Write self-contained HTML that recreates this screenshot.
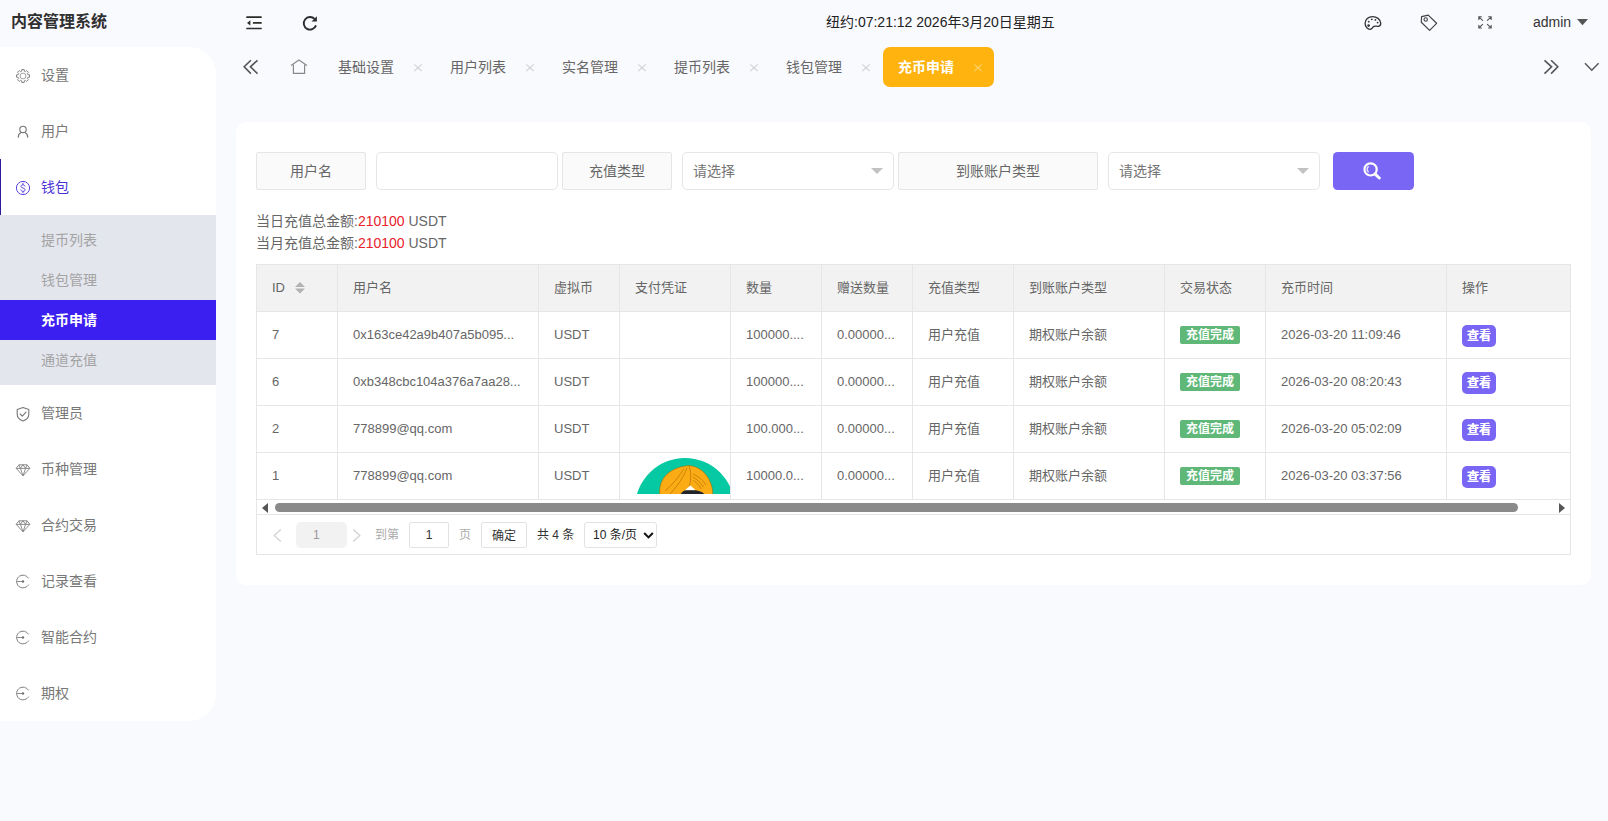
<!DOCTYPE html>
<html lang="zh-CN">
<head>
<meta charset="utf-8">
<title>内容管理系统</title>
<style>
*{box-sizing:border-box;margin:0;padding:0}
html,body{width:1608px;height:821px;overflow:hidden}
body{background:#f9fafe;font-family:"Liberation Sans","Noto Sans CJK SC",sans-serif;font-size:14px;color:#666;position:relative}
.abs{position:absolute}
svg{display:block;overflow:visible}

/* ---------- sidebar ---------- */
#logo{left:11px;top:9px;height:26px;line-height:26px;font-size:16px;font-weight:bold;color:#303030}
#side{left:0;top:47px;width:216px;height:674px;background:#fff;border-radius:0 27px 27px 0;overflow:hidden}
.mi{position:absolute;left:0;width:216px;height:56px;line-height:56px;padding-left:41px;font-size:14px;color:#777}
.mi svg{position:absolute;left:15px;top:21px}
.mi.on{color:#4b32d6;border-left:1px solid #2c1c9c;padding-left:40px}
.mi.on svg{left:14px}
#sub{left:0;top:168px;width:216px;height:170px;background:#e4e6ee}
.si{position:absolute;left:0;width:216px;height:40px;line-height:40px;padding-left:41px;font-size:14px;color:#a3a3a3}
.si.on{background:#3b1ff0;color:#fff;font-weight:bold}

/* ---------- header ---------- */
#clock{left:826px;top:12px;height:20px;line-height:20px;font-size:14px;color:#222;white-space:nowrap}
#admin{left:1533px;top:12px;height:20px;line-height:20px;font-size:14px;color:#333}
.tab{position:absolute;top:47px;height:40px;line-height:40px;font-size:14px;color:#666;white-space:nowrap}
.tx{position:absolute;top:47px;height:40px;line-height:40px;font-size:13px;color:#c8c8c8}
#tabon{left:883px;top:47px;width:111px;height:40px;background:#ffb30f;border-radius:7px}

/* ---------- card ---------- */
#card{left:236px;top:122px;width:1355px;height:463px;background:#fff;border-radius:10px}

/* ---------- form ---------- */
.fl{position:absolute;top:152px;height:38px;line-height:36px;border:1px solid #e6e6e6;background:#fafafa;border-radius:2px;text-align:center;font-size:14px;color:#666;white-space:nowrap}
.fi{position:absolute;top:152px;height:38px;line-height:36px;border:1px solid #e6e6e6;background:#fff;border-radius:5px;font-size:14px;color:#757575;padding-left:10px;white-space:nowrap}
.fi i{position:absolute;right:10px;top:15px;width:0;height:0;border:6px solid transparent;border-top-color:#c2c2c2}
#sbtn{left:1333px;top:152px;width:81px;height:38px;background:#7a66f5;border-radius:4.5px}
.tot{position:absolute;left:256px;height:22px;line-height:22px;font-size:14px;color:#666;white-space:nowrap}
.tot b{font-weight:normal;color:#e6222b}

/* ---------- table ---------- */
#tbl{left:256px;top:264px;width:1315px;height:291px;border:1px solid #e6e6e6;overflow:hidden;background:#fff}
.row{position:absolute;left:0;width:1313px;height:47px;border-bottom:1px solid #e6e6e6;font-size:13px;color:#666}
.row.hd{background:#f2f2f2}
.c{position:absolute;top:0;height:46px;line-height:46px;border-right:1px solid #e6e6e6;padding-left:15px;white-space:nowrap;overflow:hidden}
.c1{left:0;width:81px}.c2{left:81px;width:201px}.c3{left:282px;width:81px}.c4{left:363px;width:111px}
.c5{left:474px;width:91px}.c6{left:565px;width:91px}.c7{left:656px;width:101px}.c8{left:757px;width:151px}
.c9{left:908px;width:101px}.c10{left:1009px;width:181px}.c11{left:1190px;width:123px;border-right:0}
.bd{position:absolute;left:15px;top:14px;height:18px;line-height:18px;padding:0 6px;background:#5fb878;color:#fff;font-size:12px;font-weight:bold;border-radius:2px}
.vb{position:absolute;left:15px;top:13px;width:34px;height:22px;line-height:22px;text-align:center;background:#7a66f5;color:#fff;font-size:12px;font-weight:bold;border-radius:5px;text-shadow:0 0 .6px #fff}
.sort{position:absolute;left:38px;top:17px}
#hsb{position:absolute;left:0;top:235px;width:1313px;height:15px;border-bottom:1px solid #e6e6e6;background:#fff}
#hsb .th{position:absolute;left:18px;top:3px;width:1243px;height:9px;border-radius:5px;background:#8a8a8a}
#hsb .al{position:absolute;left:5px;top:2.5px;width:0;height:0;border:5px solid transparent;border-left-width:0;border-right:6px solid #555}
#hsb .ar{position:absolute;left:1302px;top:2.5px;width:0;height:0;border:5px solid transparent;border-right-width:0;border-left:6px solid #555}
#pg{position:absolute;left:0;top:250px;width:1313px;height:39px;font-size:12px;color:#aaa}
#pg div,#pg span{position:absolute;top:7px;height:26px;line-height:26px;white-space:nowrap}
#pg .bx{border:1px solid #e2e2e2;border-radius:2px;background:#fff;color:#333;text-align:center;line-height:24px}
</style>
</head>
<body>

<!-- logo -->
<div id="logo" class="abs">内容管理系统</div>

<!-- sidebar -->
<div id="side" class="abs">
  <div class="mi" style="top:0"><svg width="16" height="16" viewBox="-8 -8 16 16"><path d="M-1.28 -4.83 L-1.24 -6.48 L1.24 -6.48 L1.28 -4.83 L2.51 -4.32 L3.71 -5.46 L5.46 -3.71 L4.32 -2.51 L4.83 -1.28 L6.48 -1.24 L6.48 1.24 L4.83 1.28 L4.32 2.51 L5.46 3.71 L3.71 5.46 L2.51 4.32 L1.28 4.83 L1.24 6.48 L-1.24 6.48 L-1.28 4.83 L-2.51 4.32 L-3.71 5.46 L-5.46 3.71 L-4.32 2.51 L-4.83 1.28 L-6.48 1.24 L-6.48 -1.24 L-4.83 -1.28 L-4.32 -2.51 L-5.46 -3.71 L-3.71 -5.46 L-2.51 -4.32Z" fill="none" stroke="#858585" stroke-width="1" stroke-linejoin="round"/><circle r="2.9" fill="none" stroke="#9a9a9a" stroke-width=".9"/></svg>设置</div>
  <div class="mi" style="top:56px"><svg width="16" height="16" viewBox="-8 -8 16 16"><circle cx="0" cy="-2.6" r="3.2" fill="none" stroke="#777" stroke-width="1.15"/><path d="M-4.7 5.2 A4.9 4.9 0 0 1 -2 0.6 M2 0.6 A4.9 4.9 0 0 1 4.7 5.2" fill="none" stroke="#777" stroke-width="1.15" stroke-linecap="round"/></svg>用户</div>
  <div class="mi on" style="top:112px"><svg width="16" height="16" viewBox="-8 -8 16 16"><circle r="6.6" fill="none" stroke="#5a43e0" stroke-width="1"/><path d="M2 -1.9 C1.8 -3.6 -2.1 -3.8 -2.1 -1.6 C-2.1 0.4 2.2 -0.4 2.2 1.8 C2.2 4 -2 3.8 -2.3 1.9 M0 -4.8 V-3.3 M0 3.4 V4.9" fill="none" stroke="#5a43e0" stroke-width=".95" stroke-linecap="round"/></svg>钱包</div>
  <div id="sub" class="abs">
    <div class="si" style="top:5px">提币列表</div>
    <div class="si" style="top:45px">钱包管理</div>
    <div class="si on" style="top:85px">充币申请</div>
    <div class="si" style="top:125px">通道充值</div>
  </div>
  <div class="mi" style="top:338px"><svg width="16" height="16" viewBox="-8 -8 16 16"><path d="M0 -6.6 L5.8 -4.6 V0.2 C5.8 3.6 3 5.8 0 7 C-3 5.8 -5.8 3.6 -5.8 0.2 V-4.6 Z" fill="none" stroke="#777" stroke-width="1.1" stroke-linejoin="round"/><path d="M-2.8 0 L-0.7 2.1 L3 -1.9" fill="none" stroke="#777" stroke-width="1.1" stroke-linecap="round" stroke-linejoin="round"/></svg>管理员</div>
  <div class="mi" style="top:394px"><svg width="16" height="16" viewBox="-8 -8 16 16"><path d="M-4 -5.2 H4 L6.8 -1.6 L0 5.8 L-6.8 -1.6 Z M-6.8 -1.6 H6.8 M-2.6 -1.6 L0 5.8 L2.6 -1.6 M-4 -5.2 L-2.6 -1.6 L0 -5.2 L2.6 -1.6 L4 -5.2" fill="none" stroke="#808080" stroke-width="0.9" stroke-linejoin="round"/></svg>币种管理</div>
  <div class="mi" style="top:450px"><svg width="16" height="16" viewBox="-8 -8 16 16"><path d="M-4 -5.2 H4 L6.8 -1.6 L0 5.8 L-6.8 -1.6 Z M-6.8 -1.6 H6.8 M-2.6 -1.6 L0 5.8 L2.6 -1.6 M-4 -5.2 L-2.6 -1.6 L0 -5.2 L2.6 -1.6 L4 -5.2" fill="none" stroke="#808080" stroke-width="0.9" stroke-linejoin="round"/></svg>合约交易</div>
  <div class="mi" style="top:506px"><svg width="16" height="16" viewBox="-8 -7.5 16 16"><path d="M5.4 -3.4 A6.4 6.4 0 1 0 5.4 3.4" fill="none" stroke="#808080" stroke-width="1" stroke-linecap="round" stroke-dasharray="4.2 0.9"/><path d="M-6.4 0 H0" stroke="#8a8a8a" stroke-width="1"/><circle r="1.2" fill="#707070"/></svg>记录查看</div>
  <div class="mi" style="top:562px"><svg width="16" height="16" viewBox="-8 -7.5 16 16"><path d="M5.4 -3.4 A6.4 6.4 0 1 0 5.4 3.4" fill="none" stroke="#808080" stroke-width="1" stroke-linecap="round" stroke-dasharray="4.2 0.9"/><path d="M-6.4 0 H0" stroke="#8a8a8a" stroke-width="1"/><circle r="1.2" fill="#707070"/></svg>智能合约</div>
  <div class="mi" style="top:618px"><svg width="16" height="16" viewBox="-8 -7.5 16 16"><path d="M5.4 -3.4 A6.4 6.4 0 1 0 5.4 3.4" fill="none" stroke="#808080" stroke-width="1" stroke-linecap="round" stroke-dasharray="4.2 0.9"/><path d="M-6.4 0 H0" stroke="#8a8a8a" stroke-width="1"/><circle r="1.2" fill="#707070"/></svg>期权</div>
</div>

<!-- header -->
<div id="clock" class="abs">纽约:07:21:12 2026年3月20日星期五</div>
<div id="admin" class="abs">admin</div>

<!-- tabs -->
<div id="tabon" class="abs"></div>
<div class="tab" style="left:338px">基础设置</div>
<div class="tab" style="left:450px">用户列表</div>
<div class="tab" style="left:562px">实名管理</div>
<div class="tab" style="left:674px">提币列表</div>
<div class="tab" style="left:786px">钱包管理</div>
<div class="tab" style="left:898px;color:#fff;font-weight:bold">充币申请</div>


<!-- header icons -->
<svg class="abs" style="left:246px;top:16px" width="16" height="14" viewBox="0 0 16 14"><path d="M1 1.2H15M7.6 6.9H15M1 12.5H15" stroke="#2b2b2b" stroke-width="1.7" stroke-linecap="round" fill="none"/><path d="M4.4 4.3V9.5L1 6.9Z" fill="#2b2b2b"/></svg>
<svg class="abs" style="left:302px;top:15px" width="16" height="16" viewBox="0 0 16 16"><path d="M14 10.4A6.3 6.3 0 1 1 12.6 3.9" stroke="#2b2b2b" stroke-width="1.9" fill="none"/><path d="M14.9 1.2V6.6H9.6Z" fill="#2b2b2b"/></svg>
<svg class="abs" style="left:1364px;top:15px" width="18" height="16" viewBox="0 0 18 16"><path d="M8.6 1.6C4.3 1.6 1.1 4.6 1.1 8.3C1.1 11.9 3.6 14.3 6 14.3C8 14.3 8.3 12.9 9.3 11.8C10.6 10.4 12.5 11.6 14.4 11.3C16.2 11 16.9 9.6 16.7 8C16.2 4.2 12.7 1.6 8.6 1.6Z" fill="none" stroke="#333" stroke-width="1.3"/><circle cx="4.6" cy="10.6" r="1.3" fill="#333"/><circle cx="4.7" cy="6.7" r="0.9" fill="#333"/><circle cx="7.8" cy="4.3" r="0.9" fill="#333"/><circle cx="11.4" cy="4.9" r="0.9" fill="#333"/><circle cx="13.6" cy="7.6" r="0.9" fill="#333"/></svg>
<svg class="abs" style="left:1420px;top:14px" width="18" height="18" viewBox="0 0 18 18"><path d="M1.6 2.6L8.2 1.1L16.6 9.3L9.6 16.4L1.3 8.2Z" fill="none" stroke="#444" stroke-width="1.2" stroke-linejoin="round"/><circle cx="5.7" cy="5.5" r="1.7" fill="none" stroke="#444" stroke-width="1.1"/></svg>
<svg class="abs" style="left:1478px;top:16px" width="14" height="13" viewBox="0 0 14 13"><path d="M4.6 4.4L0.8 0.8M0.8 3.4V0.8H3.4 M9.4 4.4L13.2 0.8M10.6 0.8H13.2V3.4 M4.6 8.4L0.8 12M0.8 9.4V12H3.4 M9.4 8.4L13.2 12M13.2 9.4V12H10.6" fill="none" stroke="#555" stroke-width="1.1" stroke-linecap="round" stroke-linejoin="round"/></svg>
<svg class="abs" style="left:1577px;top:19px" width="11" height="7" viewBox="0 0 11 7"><path d="M0 0H11L5.5 6.2Z" fill="#555"/></svg>

<!-- tab bar icons -->
<svg class="abs" style="left:243px;top:59px" width="16" height="16" viewBox="0 0 16 16"><path d="M7.9 1.3L1.2 7.8L7.9 14.6M14.5 1.3L7.4 7.8L14.5 14.6" fill="none" stroke="#555" stroke-width="1.6"/></svg>
<svg class="abs" style="left:290px;top:59px" width="18" height="16" viewBox="0 0 18 16"><path d="M1 6.5L8.9 1L17 6.5" fill="none" stroke="#888" stroke-width="1.1"/><path d="M3.4 5.6V14.4H14.6V5.6" fill="none" stroke="#888" stroke-width="1.2" stroke-linejoin="round"/></svg>
<svg class="abs" style="left:1543px;top:59px" width="16" height="16" viewBox="0 0 16 16"><path d="M1.5 1.3L8.6 7.8L1.5 14.6M8.1 1.3L14.8 7.8L8.1 14.6" fill="none" stroke="#555" stroke-width="1.6"/></svg>
<svg class="abs" style="left:1584px;top:62px" width="16" height="10" viewBox="0 0 16 10"><path d="M1 1.2L7.8 8.2L14.6 1.2" fill="none" stroke="#555" stroke-width="1.4"/></svg>
<svg class="abs" style="left:414px;top:64px" width="8" height="8" viewBox="0 0 8 8"><path d="M0.3 0.4L7.7 7.1M7.7 0.4L0.3 7.1" stroke="#cfcfcf" stroke-width="1.05" fill="none"/></svg>
<svg class="abs" style="left:526px;top:64px" width="8" height="8" viewBox="0 0 8 8"><path d="M0.3 0.4L7.7 7.1M7.7 0.4L0.3 7.1" stroke="#cfcfcf" stroke-width="1.05" fill="none"/></svg>
<svg class="abs" style="left:638px;top:64px" width="8" height="8" viewBox="0 0 8 8"><path d="M0.3 0.4L7.7 7.1M7.7 0.4L0.3 7.1" stroke="#cfcfcf" stroke-width="1.05" fill="none"/></svg>
<svg class="abs" style="left:750px;top:64px" width="8" height="8" viewBox="0 0 8 8"><path d="M0.3 0.4L7.7 7.1M7.7 0.4L0.3 7.1" stroke="#cfcfcf" stroke-width="1.05" fill="none"/></svg>
<svg class="abs" style="left:862px;top:64px" width="8" height="8" viewBox="0 0 8 8"><path d="M0.3 0.4L7.7 7.1M7.7 0.4L0.3 7.1" stroke="#cfcfcf" stroke-width="1.05" fill="none"/></svg>
<svg class="abs" style="left:974px;top:64px" width="8" height="8" viewBox="0 0 8 8"><path d="M0.3 0.4L7.7 7.1M7.7 0.4L0.3 7.1" stroke="#f9d373" stroke-width="1.1" fill="none"/></svg>

<!-- card -->
<div id="card" class="abs"></div>


<!-- card content -->
<div class="fl" style="left:256px;width:110px">用户名</div>
<div class="fi" style="left:376px;width:182px"></div>
<div class="fl" style="left:562px;width:110px">充值类型</div>
<div class="fi" style="left:682px;width:212px">请选择<i></i></div>
<div class="fl" style="left:898px;width:200px">到账账户类型</div>
<div class="fi" style="left:1108px;width:212px">请选择<i></i></div>
<div id="sbtn" class="abs"><svg class="abs" style="left:29px;top:9px" width="20" height="20" viewBox="0 0 20 20"><circle cx="8.6" cy="8.4" r="6.1" fill="none" stroke="#fff" stroke-width="2.2"/><path d="M13.2 13.2L17.3 17" stroke="#fff" stroke-width="3" stroke-linecap="round"/><path d="M6.6 5.4A3.6 3.6 0 0 0 6.6 11.2" fill="none" stroke="#fff" stroke-width="1.4" opacity=".85"/></svg></div>

<div class="tot" style="top:210px">当日充值总金额:<b>210100</b> USDT</div>
<div class="tot" style="top:232px">当月充值总金额:<b>210100</b> USDT</div>

<div id="tbl" class="abs">
  <div class="row hd" style="top:0">
    <div class="c c1">ID<svg class="sort" width="10" height="12" viewBox="0 0 10 12"><path d="M0 5L5 0L10 5Z M0 6.6L5 11.4L10 6.6Z" fill="#b2b2b2"/></svg></div><div class="c c2">用户名</div><div class="c c3">虚拟币</div><div class="c c4">支付凭证</div>
    <div class="c c5">数量</div><div class="c c6">赠送数量</div><div class="c c7">充值类型</div><div class="c c8">到账账户类型</div>
    <div class="c c9">交易状态</div><div class="c c10">充币时间</div><div class="c c11">操作</div>
  </div>
  <div class="row" style="top:47px">
    <div class="c c1">7</div><div class="c c2">0x163ce42a9b407a5b095...</div><div class="c c3">USDT</div><div class="c c4"></div>
    <div class="c c5">100000....</div><div class="c c6">0.00000...</div><div class="c c7">用户充值</div><div class="c c8">期权账户余额</div>
    <div class="c c9"><span class="bd">充值完成</span></div><div class="c c10">2026-03-20 11:09:46</div><div class="c c11"><span class="vb">查看</span></div>
  </div>
  <div class="row" style="top:94px">
    <div class="c c1">6</div><div class="c c2">0xb348cbc104a376a7aa28...</div><div class="c c3">USDT</div><div class="c c4"></div>
    <div class="c c5">100000....</div><div class="c c6">0.00000...</div><div class="c c7">用户充值</div><div class="c c8">期权账户余额</div>
    <div class="c c9"><span class="bd">充值完成</span></div><div class="c c10">2026-03-20 08:20:43</div><div class="c c11"><span class="vb">查看</span></div>
  </div>
  <div class="row" style="top:141px">
    <div class="c c1">2</div><div class="c c2">778899@qq.com</div><div class="c c3">USDT</div><div class="c c4"></div>
    <div class="c c5">100.000...</div><div class="c c6">0.00000...</div><div class="c c7">用户充值</div><div class="c c8">期权账户余额</div>
    <div class="c c9"><span class="bd">充值完成</span></div><div class="c c10">2026-03-20 05:02:09</div><div class="c c11"><span class="vb">查看</span></div>
  </div>
  <div class="row" style="top:188px">
    <div class="c c1">1</div><div class="c c2">778899@qq.com</div><div class="c c3">USDT</div><div class="c c4" id="imgcell"><div id="imgcell-in" style="position:absolute;left:15px;top:5px;width:96px;height:36px;overflow:hidden"><svg width="100" height="100" viewBox="0 0 100 100"><circle cx="50" cy="50" r="50" fill="#04c9a2"/><path d="M54 7.6C44 8.2 31 13 26.5 24C24 30 24.5 36 25 40H77.5C78.5 33 77 24 70 15.5C65.5 10.5 59 8 54 7.6Z" fill="#fbab14" stroke="#9a6200" stroke-width=".5"/><path d="M54 7.6C56.5 14 56 22 54.5 28.5 M52 10C48 20 42 29 34 37 M49 10.5C44 19 37 27 30 33 M58 16C63 18 68 22 71 27 M58 19C62 21.5 66 25 68.5 29 M58.5 22.5C61.5 24.5 64.5 27.5 66 31" fill="none" stroke="#8a5600" stroke-width=".45"/><path d="M49.5 32.5L55.5 27.5L61 32.5Z" fill="#fff"/><path d="M45.5 36.2C47 33.6 49 32.4 51.5 32.2H60.5C64 32.4 67.5 34 69.5 36.2Z" fill="#22262b"/></svg></div></div>
    <div class="c c5">10000.0...</div><div class="c c6">0.00000...</div><div class="c c7">用户充值</div><div class="c c8">期权账户余额</div>
    <div class="c c9"><span class="bd">充值完成</span></div><div class="c c10">2026-03-20 03:37:56</div><div class="c c11"><span class="vb">查看</span></div>
  </div>
  <div id="hsb"><div class="al"></div><div class="th"></div><div class="ar"></div></div>
  <div id="pg">
    <svg class="abs" style="left:16px;top:14px" width="9" height="13" viewBox="0 0 9 13"><path d="M7.8 0.6L1.2 6.5L7.8 12.4" fill="none" stroke="#d2d2d2" stroke-width="1.3"/></svg>
    <svg class="abs" style="left:95px;top:14px" width="9" height="13" viewBox="0 0 9 13"><path d="M1.2 0.6L7.8 6.5L1.2 12.4" fill="none" stroke="#d2d2d2" stroke-width="1.3"/></svg>
    <div style="left:39px;width:51px;background:#f2f2f2;border-radius:5px;padding-left:17px;color:#999">1</div>
    <span style="left:118px">到第</span>
    <div class="bx" style="left:152px;width:40px">1</div>
    <span style="left:202px">页</span>
    <div class="bx" style="left:224px;width:46px;line-height:26px">确定</div>
    <span style="left:280px;color:#333">共 4 条</span>
    <div class="bx" style="left:327px;width:73px;text-align:left;padding-left:8px;border-radius:3px;color:#222">10 条/页<svg class="abs" style="left:58px;top:9px" width="11" height="7" viewBox="0 0 11 7"><path d="M1.2 1L5.5 5.4L9.8 1" fill="none" stroke="#111" stroke-width="2"/></svg></div>
  </div>
</div>

</body>
</html>
